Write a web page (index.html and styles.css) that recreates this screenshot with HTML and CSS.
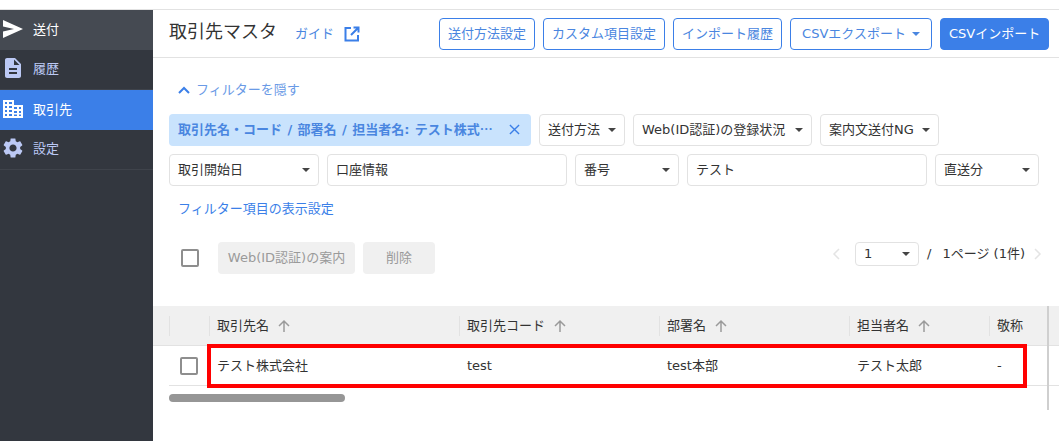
FILE: index.html
```html
<!DOCTYPE html>
<html lang="ja">
<head>
<meta charset="utf-8">
<title>取引先マスタ</title>
<link rel="stylesheet" href="styles.css">
</head>
<body>
<div class="page">
  <aside class="sidebar">
    <a class="nav-item nav-current">
      <svg class="nav-icon" viewBox="0 0 20 20"><path d="M0 1 20 10 0 19V12.500L11 10 0 7.500Z" fill="#fff"/></svg>
      <span class="nav-label">送付</span>
    </a>
    <a class="nav-item">
      <svg class="nav-icon" viewBox="2 2 20 20"><path fill="#bcc9f5" d="M14 2H6c-1.100 0-2 .9-2 2v16c0 1.100.9 2 2 2h12c1.100 0 2-.9 2-2V8l-6-6zm2 16H8v-2h8v2zm0-4H8v-2h8v2zm-3-5V3.500L18.500 9H13z"/></svg>
      <span class="nav-label">履歴</span>
    </a>
    <a class="nav-item nav-active">
      <svg class="nav-icon" viewBox="0 -1 20 20"><path fill="#fff" fill-rule="evenodd" d="M0 0H11V5H20V18H0ZM2 2V4H4V2ZM6 2V4H9V2ZM2 6V8H4V6ZM6 6V8H9V6ZM2 10V12H4V10ZM6 10V12H9V10ZM2 14V16H4V14ZM6 14V16H9V14ZM11 7V9H14V7ZM16 7V9H18V7ZM11 11V13H14V11ZM16 11V13H18V11ZM11 14.500V16H14V14.500ZM16 14.500V16H18V14.500Z"/></svg>
      <span class="nav-label">取引先</span>
    </a>
    <a class="nav-item">
      <svg class="nav-icon" viewBox="2 2 20 20"><path fill="#bcc9f5" d="M19.140 12.940c.04-.3.060-.61.060-.94 0-.32-.02-.64-.07-.94l2.030-1.580c.18-.14.230-.41.120-.61l-1.920-3.320c-.12-.22-.37-.29-.59-.22l-2.390.96c-.5-.38-1.030-.7-1.620-.94l-.36-2.540c-.04-.24-.24-.41-.48-.41h-3.840c-.24 0-.43.170-.47.41l-.36 2.540c-.59.240-1.130.570-1.620.94l-2.390-.96c-.22-.08-.47 0-.59.220L2.740 8.870c-.12.210-.08.470.12.610l2.030 1.580c-.05.3-.09.630-.09.940s.02.640.07.940l-2.030 1.580c-.18.140-.23.410-.12.610l1.920 3.320c.12.220.37.290.59.220l2.390-.96c.5.380 1.030.7 1.620.94l.36 2.540c.05.240.24.410.48.410h3.840c.24 0 .44-.17.47-.41l.36-2.540c.59-.24 1.130-.56 1.620-.94l2.390.96c.22.080.47 0 .59-.22l1.920-3.320c.12-.22.070-.47-.12-.61l-2.010-1.580zM12 15.600c-1.980 0-3.600-1.620-3.600-3.600s1.620-3.600 3.600-3.600 3.600 1.620 3.600 3.600-1.620 3.600-3.600 3.600z"/></svg>
      <span class="nav-label">設定</span>
    </a>
  </aside>
  <main class="main">
    <header class="header">
      <h1 class="title">取引先マスタ</h1>
      <a class="guide">ガイド
        <svg class="guide-icon" viewBox="0 0 16 16"><path fill="none" stroke="#3b7fe8" stroke-width="2" d="M7 2H1.500V14.500H14V9M9.500 1.500H14.500V6.500M14 2 7 9"/></svg>
      </a>
      <div class="header-actions">
        <button class="btn btn-outline">送付方法設定</button>
        <button class="btn btn-outline">カスタム項目設定</button>
        <button class="btn btn-outline">インポート履歴</button>
        <button class="btn btn-outline btn-export">CSVエクスポート<i class="caret caret-blue"></i></button>
        <button class="btn btn-primary">CSVインポート</button>
      </div>
    </header>
    <section class="filters">
      <a class="toggle">
        <svg class="toggle-icon" viewBox="0 0 12 8"><path fill="none" stroke="#3b7fe8" stroke-width="2" d="M1 7 6 2 11 7"/></svg>
        フィルターを隠す
      </a>
      <div class="filter-row filter-row-first">
        <div class="chip">
          <span class="chip-text">取引先名・コード / 部署名 / 担当者名: テスト株式<span class="chip-more">…</span></span>
          <svg class="chip-x" viewBox="0 0 12 12"><path fill="none" stroke="#3b7fe8" stroke-width="1.500" d="M1 1 11 11M11 1 1 11"/></svg>
        </div>
        <div class="select">送付方法<i class="caret"></i></div>
        <div class="select select-web">Web(ID認証)の登録状況<i class="caret"></i></div>
        <div class="select">案内文送付NG<i class="caret"></i></div>
      </div>
      <div class="filter-row">
        <div class="select select-date">取引開始日<i class="caret"></i></div>
        <div class="field">口座情報</div>
        <div class="select select-short">番号<i class="caret"></i></div>
        <div class="field">テスト</div>
        <div class="select select-short">直送分<i class="caret"></i></div>
      </div>
      <a class="filter-link">フィルター項目の表示設定</a>
    </section>
    <section class="actions">
      <span class="checkbox"></span>
      <button class="btn btn-disabled btn-guide">Web(ID認証)の案内</button>
      <button class="btn btn-disabled btn-delete">削除</button>
      <div class="pager">
        <svg class="pager-arrow" viewBox="0 0 8 12"><path fill="none" stroke="#e4e4e4" stroke-width="1.500" d="M7 1 2 6 7 11"/></svg>
        <div class="select select-page">1<i class="caret"></i></div>
        <span class="pager-slash">/</span>
        <span class="pager-text">1ページ (1件)</span>
        <svg class="pager-arrow" viewBox="0 0 8 12"><path fill="none" stroke="#e4e4e4" stroke-width="1.500" d="M1 1 6 6 1 11"/></svg>
      </div>
    </section>
    <section class="table">
      <div class="thead">
        <div class="th th-check"></div>
        <div class="th">取引先名<svg class="sort" viewBox="0 0 14 14"><path fill="none" stroke="#9a9a9a" stroke-width="1.500" d="M7 13V2M2 7 7 2 12 7"/></svg></div>
        <div class="th">取引先コード<svg class="sort" viewBox="0 0 14 14"><path fill="none" stroke="#9a9a9a" stroke-width="1.500" d="M7 13V2M2 7 7 2 12 7"/></svg></div>
        <div class="th">部署名<svg class="sort" viewBox="0 0 14 14"><path fill="none" stroke="#9a9a9a" stroke-width="1.500" d="M7 13V2M2 7 7 2 12 7"/></svg></div>
        <div class="th">担当者名<svg class="sort" viewBox="0 0 14 14"><path fill="none" stroke="#9a9a9a" stroke-width="1.500" d="M7 13V2M2 7 7 2 12 7"/></svg></div>
        <div class="th">敬称</div>
      </div>
      <div class="tbody-row">
        <div class="td td-check"><span class="checkbox"></span></div>
        <div class="td">テスト株式会社</div>
        <div class="td">test</div>
        <div class="td">test本部</div>
        <div class="td">テスト太郎</div>
        <div class="td">-</div>
      </div>
      <div class="scrollbar"></div>
      <div class="v-scroll"></div>
      <div class="highlight"></div>
    </section>
  </main>
</div>
</body>
</html>
```

FILE: styles.css
```css
* { box-sizing: border-box; }
html, body { margin: 0; height: 100%; overflow: hidden; background: #fff; }
body {
  font-family: "DejaVu Sans", "Noto Sans CJK JP", sans-serif;
  font-size: 13px;
  line-height: 18px;
  color: #333;
  padding-top: 9px;
}
.page {
  display: flex;
  height: 432px;
  border-top: 1px solid #e2e2e2;
}
.sidebar {
  width: 153px;
  flex: none;
  background: #33373f;
}
.nav-item {
  display: flex;
  align-items: center;
  height: 40px;
  padding: 0 0 3px 3px;
  gap: 10px;
  color: #bcc9f5;
  border-bottom: 1px solid #3f434b;
}
.nav-current { background: #454a52; color: #fff; border-bottom: 0; }
.nav-active { background: #3b7fe8; color: #fff; border-bottom: 0; }
.nav-icon { width: 20px; height: 20px; flex: none; }
.nav-label { padding-top: 2px; }
.main { flex: 1; min-width: 0; }
.header {
  display: flex;
  align-items: center;
  height: 48px;
  padding: 0 10px 0 16px;
  border-bottom: 1px solid #e2e2e2;
}
.title {
  margin: 0 0 3px;
  font-size: 18px;
  font-weight: 400;
  line-height: 26px;
  color: #333;
}
.guide {
  display: flex;
  align-items: center;
  gap: 10px;
  margin-left: 18px;
  color: #4a86e0;
}
.guide-icon { width: 16px; height: 16px; }
.header-actions { display: flex; gap: 8px; margin-left: auto; }
.btn {
  height: 32px;
  padding: 0 8px;
  border-radius: 4px;
  font: inherit;
  line-height: 28px;
  white-space: nowrap;
}
.btn-outline { background: #fff; border: 1px solid #3b7fe8; color: #4a86e0; }
.btn-export { width: 142px; }
.btn-primary { width: 109px; background: #3b7fe8; border: 1px solid #3b7fe8; color: #fff; }
.btn-disabled { background: #f0f0f0; border: 0; color: #9a9a9a; }
.btn-guide { width: 137px; margin-left: 19px; padding: 0; }
.btn-delete { width: 72px; margin-left: 8px; }
.caret {
  display: inline-block;
  width: 0;
  height: 0;
  border-left: 4px solid transparent;
  border-right: 4px solid transparent;
  border-top: 4px solid #444;
}
.caret-blue { border-top-color: #4a86e0; margin-left: 6px; vertical-align: middle; }
.filters { padding: 21px 20px 0 16px; }
.toggle {
  display: flex;
  align-items: center;
  height: 20px;
  padding: 1px 0 0 9px;
  gap: 6px;
  color: #6a9ae6;
}
.toggle-icon { width: 12px; height: 8px; }
.filter-row { display: flex; gap: 8px; margin-top: 8px; }
.filter-row-first { margin-top: 15px; }
.chip {
  display: flex;
  align-items: center;
  width: 362px;
  height: 32px;
  padding: 0 9px 1px;
  border-radius: 4px;
  background: #c9e3fd;
  color: #4a86e0;
  font-weight: 700;
}
.chip-text {
  flex: 1;
  min-width: 0;
  white-space: nowrap;
  word-spacing: .9px;
}
.chip-more { font-family: "Noto Sans CJK JP", sans-serif; }
.chip-x { width: 11px; height: 11px; margin-right: 2px; flex: none; }
.select, .field {
  display: flex;
  align-items: center;
  height: 32px;
  padding: 0 8px 1px;
  border: 1px solid #e2e2e2;
  border-radius: 4px;
  background: #fff;
  white-space: nowrap;
}
.select { gap: 8px; }
.select-web { width: 179px; justify-content: space-between; }
.select-date { width: 150px; justify-content: space-between; }
.select-short { width: 104px; justify-content: space-between; }
.select-page { width: 64px; height: 24px; justify-content: space-between; }
.field { width: 240px; }
.filter-link {
  display: block;
  margin-top: 13px;
  padding-left: 9px;
  line-height: 20px;
  color: #3b7fe8;
}
.actions {
  display: flex;
  align-items: flex-start;
  height: 64px;
  margin-top: 23px;
  padding-left: 28px;
}
.actions > .checkbox { margin-top: 7px; }
.checkbox {
  display: block;
  width: 18px;
  height: 18px;
  flex: none;
  border: 2px solid #8e8e8e;
  border-radius: 2px;
  background: #fff;
}
.pager {
  display: flex;
  align-items: center;
  height: 24px;
  margin-left: auto;
  padding-right: 17px;
}
.pager-arrow { width: 8px; height: 12px; }
.pager .select { margin-left: 15px; }
.pager-slash { margin-left: 8px; }
.pager-text { margin: 0 9px 0 11px; white-space: nowrap; }
.table { position: relative; height: 105px; }
.thead, .tbody-row {
  display: grid;
  grid-template-columns: 40px 250px 200px 190px 140px 1fr;
  align-items: center;
}
.thead {
  height: 40px;
  padding-left: 16px;
  background: #f0f0f0;
  border-bottom: 1px solid #e2e2e2;
}
.th {
  display: flex;
  align-items: center;
  gap: 8px;
  height: 20px;
  padding-left: 7px;
  border-left: 1px solid #e2e2e2;
  white-space: nowrap;
}
.th-check { padding: 0; }
.sort { width: 14px; height: 14px; }
.tbody-row {
  height: 40px;
  margin-left: 16px;
  border-bottom: 1px solid #e2e2e2;
}
.td { padding-left: 8px; white-space: nowrap; }
.td-check { padding-left: 11px; }
.scrollbar {
  width: 176px;
  height: 8px;
  margin: 8px 0 0 16px;
  border-radius: 4px;
  background: #969696;
}
.v-scroll {
  position: absolute;
  top: 0;
  left: 894px;
  width: 2px;
  height: 104px;
  background: #cfcfcf;
}
.highlight {
  position: absolute;
  top: 38px;
  left: 54px;
  width: 820px;
  height: 44px;
  border: 4px solid #f00;
}
```
